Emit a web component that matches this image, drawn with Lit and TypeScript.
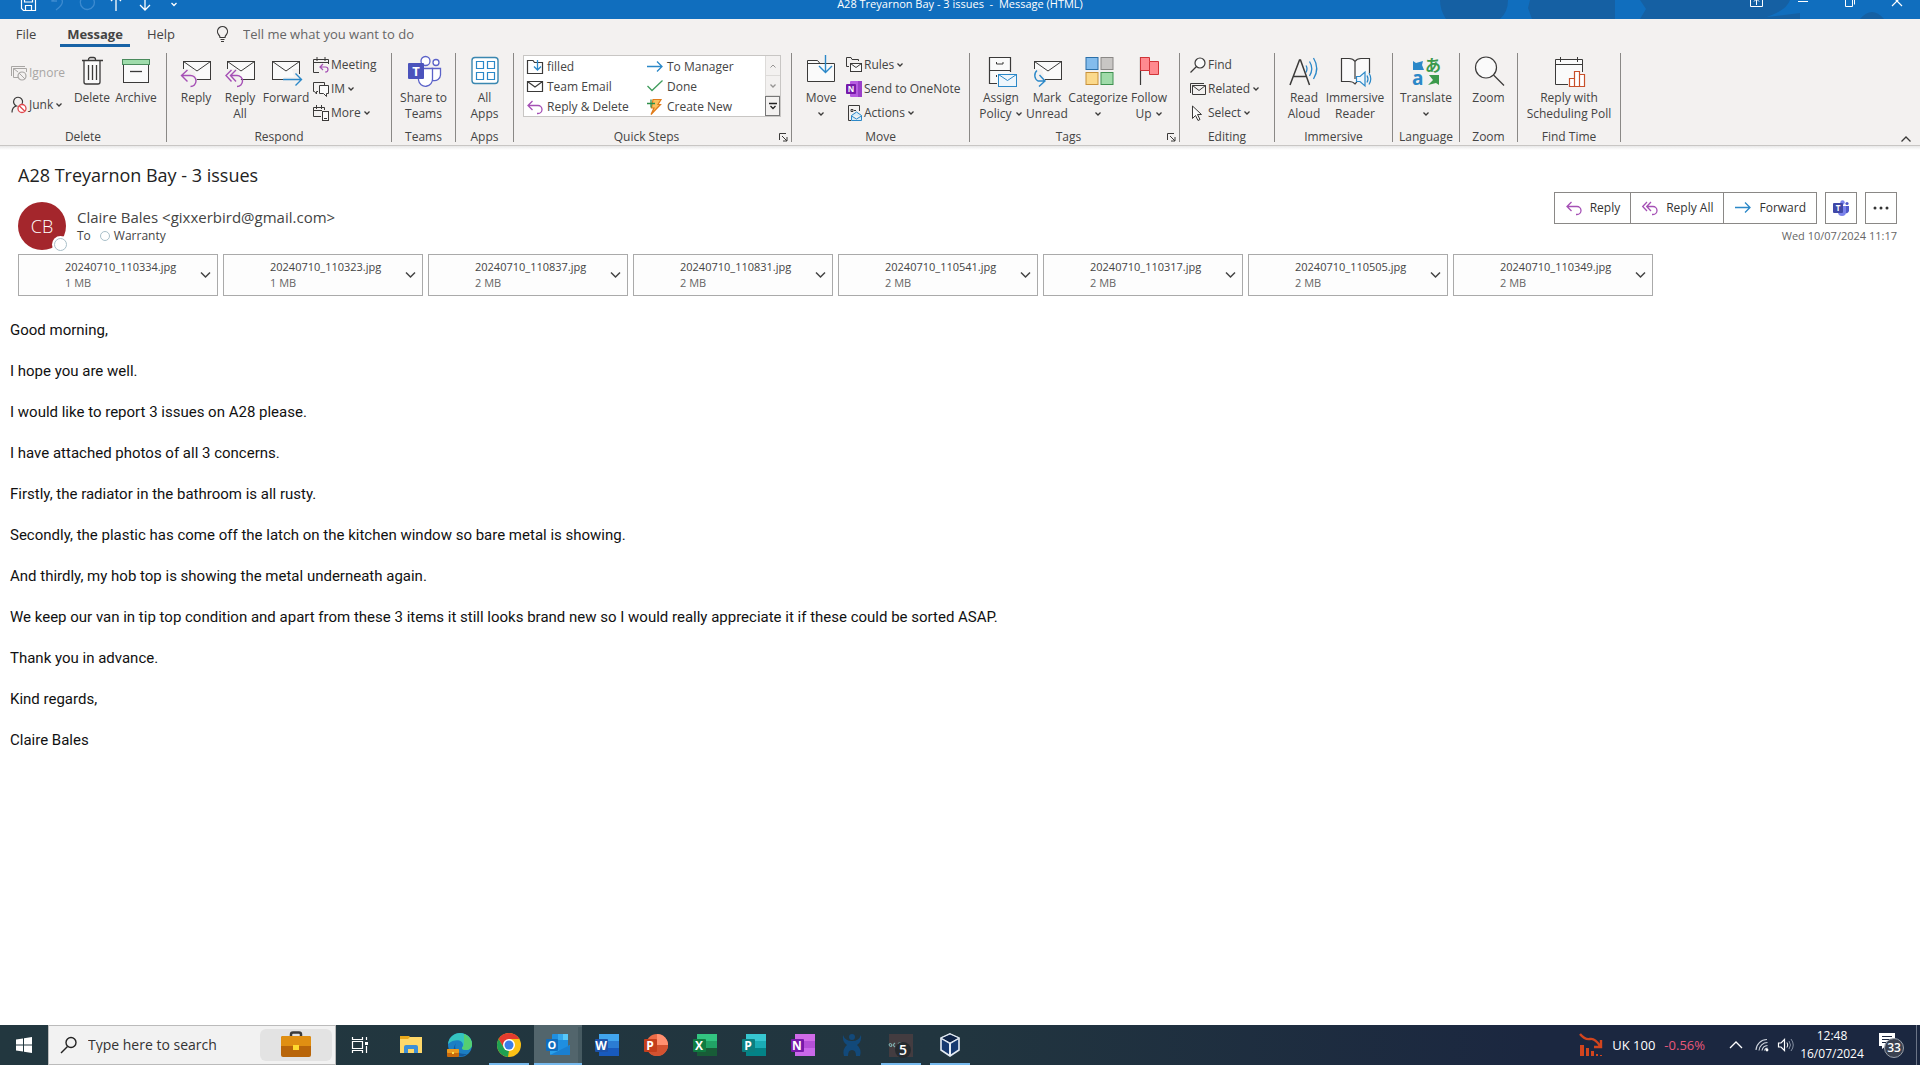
import { LitElement, html, css, svg, nothing, TemplateResult } from "lit";
import { customElement } from "lit/decorators.js";
import { classMap } from "lit/directives/class-map.js";

type Icon = TemplateResult;

const icon = (w: number, h: number, body: unknown, cls = ""): Icon =>
  html`<svg class="ico ${cls}" width=${w} height=${h} viewBox="0 0 ${w} ${h}" fill="none" aria-hidden="true">${body}</svg>`;

const INK = "#3b3a39";
const BLUE = "#2b88c8";
const PURPLE = "#a550b5";

const chevron = (): Icon => icon(8, 6, svg`<path d="M1.500 1.500L4 4L6.500 1.500" stroke=${INK} stroke-width="1.300"/>`);

/* ---------- large ribbon icons, 32 x 32 ---------- */
const envelope = (x: number, y: number) => svg`
  <rect x=${x} y=${y} width="27" height="18" fill="#fafafa" stroke=${INK}/>
  <path d="M${x} ${y}l13.500 9.500L${x + 27} ${y}" stroke=${INK}/>`;

const big = {
  trash: icon(32, 32, svg`<path d="M8 5.500V27a2 2 0 0 0 2 2H22a2 2 0 0 0 2-2V5.500" fill="#fafafa" stroke=${INK} stroke-width="1.300"/>
    <path d="M6 5.500H27M12.500 5.500V4.500a2 2 0 0 1 2-2h3a2 2 0 0 1 2 2v1M12.500 10V25M16.500 10V25M20.500 10V25" stroke=${INK} stroke-width="1.300"/>`),
  archive: icon(32, 32, svg`<rect x="3.500" y="9.500" width="25" height="18" fill="#fafafa" stroke=${INK}/>
    <rect x="2.500" y="4.500" width="27" height="5" fill="#9fdcab" stroke="#4a8a5c"/><path d="M10 16.500H22" stroke=${INK} stroke-width="1.300"/>`),
  reply: icon(32, 32, svg`${envelope(3.5, 6.5)}<path d="M0 14H14L19 32H0Z" fill="#f3f1f0"/>
    <path d="M3.500 6.500V14" stroke=${INK}/><path d="M7.500 15L1.500 20.500L7.500 26.500M1.500 20.500H10.500a5.500 5.500 0 0 1 0 11" stroke=${PURPLE} stroke-width="1.400"/>`),
  replyAll: icon(32, 32, svg`${envelope(3.5, 6.5)}<path d="M0 14H14L19 32H0Z" fill="#f3f1f0"/>
    <path d="M3.500 6.500V14" stroke=${INK}/><path d="M7.500 15L2 20.500L7.500 26.500M12 15L6.500 20.500L12 26.500M6.500 20.500H13a5.500 5.500 0 0 1 0 11" stroke=${PURPLE} stroke-width="1.400"/>`),
  forward: icon(32, 32, svg`${envelope(2.5, 6.5)}<path d="M14 22H24L22 14H32V32H14Z" fill="#f3f1f0"/>
    <path d="M29.500 6.500V19" stroke=${INK}/><path d="M13 24.500H31M25.500 18.500L31.500 24.500L25.500 30.500" stroke=${BLUE} stroke-width="1.400"/>`),
  teams: icon(34, 32, svg`<circle cx="18.500" cy="6" r="4.500" fill="#fff" stroke="#5b62c8" stroke-width="1.300"/>
    <circle cx="29" cy="7.500" r="3" fill="#fff" stroke="#5b62c8" stroke-width="1.300"/>
    <path d="M24.500 13.500H33.500V20a6 6 0 0 1-7.500 5.500" fill="#fff" stroke="#5b62c8" stroke-width="1.300"/>
    <path d="M11.500 13.500H25.500V23.500a7 7 0 0 1-14 1.500Z" fill="#fff" stroke="#5b62c8" stroke-width="1.300"/>
    <rect x="1" y="8" width="16" height="16" rx="1" fill="#4b53bc"/>
    <text x="9" y="21" text-anchor="middle" class="glyph" font-size="13" fill="#fff">T</text>`),
  apps: icon(32, 32, svg`<rect x="3" y="2.500" width="26" height="26" rx="3" fill="#fff" stroke="#3a87b0" stroke-width="1.400"/>
    <path d="M7.500 6.500h7v7h-7ZM18.500 6.500h7v7h-7ZM7.500 17.500h7v7h-7ZM18.500 17.500h7v7h-7Z" stroke="#2b88c8" stroke-width="1.200"/>`),
  move: icon(32, 32, svg`<path d="M2.500 26.500V5.500H12.500L15 8.500H29.500V26.500Z" fill="#fafafa" stroke=${INK}/><path d="M2.500 8.500H15" stroke=${INK}/>
    <path d="M20.500 0V17M14 11L20.500 17.500L27 11" stroke=${BLUE} stroke-width="1.400"/>`),
  policy: icon(32, 32, svg`<path d="M12 28.500H4.500V2.500H25.500V17M4.500 15.500H25.500" fill="#fafafa" stroke=${INK} stroke-width="1.200"/>
    <path d="M11.500 7v2H18V7M11.500 20v2" stroke=${INK}/><rect x="13.500" y="19.500" width="18" height="12" fill="#eef6fc" stroke=${BLUE}/><path d="M13.500 19.500l9 6 9-6" stroke=${BLUE}/>`),
  unread: icon(32, 32, svg`${envelope(3.5, 6.5)}<path d="M0 14H11L16 32H0Z" fill="#f3f1f0"/>
    <path d="M6 15.500a6.500 6.500 0 0 0 1 10.500H13M8.500 20L14 26L8 31.500" stroke=${BLUE} stroke-width="1.400"/>`),
  categorize: icon(32, 32, svg`<rect x="4" y="2.500" width="12" height="12" fill="#83bcec" stroke="#2a6fa8"/><rect x="19" y="2.500" width="12" height="12" fill="#c8c6c4" stroke="#8a8886"/>
    <rect x="4" y="17.500" width="12" height="12" fill="#fbd98b" stroke="#c8913a"/><rect x="19" y="17.500" width="12" height="12" fill="#a0dba9" stroke="#3f9150"/>`),
  flag: icon(32, 32, svg`<path d="M7.500 2V30" stroke=${INK} stroke-width="1.200"/><path d="M7.500 2.500H16.500V6.500H25.500V19.500H16.500V15.500H7.500Z" fill="#ff8a8f" stroke="#d13438"/><path d="M16.500 6.500V15.500" stroke="#d13438"/>`),
  aloud: icon(32, 32, svg`<path d="M18 10.500q2 3 0 7M21.500 6.500q4.500 7 0 14.500M25.500 3q6.500 10.500 0 21" stroke=${BLUE} stroke-width="1.300"/>
    <path d="M2 30L11.500 5H12.500L21.500 30M5.500 21.500H18.500" stroke=${INK} stroke-width="1.500"/>`),
  reader: icon(32, 32, svg`<path d="M16 6.500Q14 3.500 10 3.500H2.500V26.500H10Q14 26.500 16 29Q17 27.500 18 27" fill="#fafafa" stroke=${INK} stroke-width="1.200"/>
    <path d="M16 24V6.500Q18 3.500 22 3.500H30.500V18" fill="#fafafa" stroke=${INK} stroke-width="1.200"/>
    <path d="M17.500 21.500h3.500l5-4.500v14l-5-4.500h-3.500ZM28 20.500q2 3.500 0 7M30 18q3.500 6 0 11.500" fill="#eef6fc" stroke=${BLUE} stroke-width="1.200"/>`),
  translate: icon(32, 32, svg`<path d="M3 6l3 2 7-2-1 4 2 5H3Z" fill="#2b88c8"/><path d="M29 30l-3-2-8 2 5-5-4-5H29Z" fill="#3c9a4c"/>
    <text x="2" y="30" class="glyph" font-size="19" fill="#2b88c8">a</text><text x="15" y="16" class="cjk" font-size="16" fill="#3c9a4c">あ</text>`),
  zoom: icon(32, 32, svg`<circle cx="13" cy="12.500" r="10.500" fill="#fafafa" stroke=${INK} stroke-width="1.200"/><path d="M20.500 20L31 30.500" stroke=${INK} stroke-width="1.200"/>`),
  poll: icon(32, 32, svg`<path d="M15 29.500H2.500V4.500H29.500V17M2.500 9.500H29.500M7.500 2V7M24.500 2V7" fill="#fafafa" stroke=${INK}/>
    <path d="M16.500 23.500H21.500V31.500H16.500ZM21.500 16.500H26.500V31.500H21.500ZM26.500 19.500H31.500V31.500H26.500Z" fill="#fff" stroke="#c8502b" stroke-width="1.200"/>`),
};

/* ---------- small icons, 16 x 16 ---------- */
const replyArrow = svg`<path d="M5.500 2L1 6.500L5.500 11M1 6.500H11a4 4 0 0 1 0 8H10" stroke=${PURPLE} stroke-width="1.300"/>`;
const small = {
  ignore: icon(16, 16, svg`<path d="M7 12.500H2.500V3.500H15.500V7M2.500 3.500L7 7M.500 11V1.500H14" stroke="#a8a6a4"/><circle cx="11" cy="11" r="4" stroke="#a8a6a4" stroke-width="1.200"/><path d="M8 8l6 6" stroke="#a8a6a4"/>`),
  junk: icon(16, 16, svg`<path d="M1 15.500Q1 10 5.500 9A4.500 4.500 0 1 1 11 7" stroke=${INK} stroke-width="1.200"/><circle cx="11" cy="11.500" r="4" fill="#fff" stroke="#e0484d" stroke-width="1.300"/><path d="M8.200 8.700l5.600 5.600" stroke="#e0484d" stroke-width="1.300"/>`),
  meeting: icon(16, 16, svg`<path d="M6 15.500H.500V2.500H15.500V7M.500 5.500H15.500M4 0V4M12 0V4" stroke=${INK}/><path d="M10 7L7 10L10 13M7 10H12.500a2.500 2.500 0 0 1 0 5H12" stroke=${PURPLE} stroke-width="1.200"/>`),
  im: icon(16, 16, svg`<path d="M5 10.500H3.500V13L1.500 10.500H.500V1.500H11.500V4" stroke=${INK}/><path d="M6.500 4.500H15.500V12.500H13.500V15.500L10.500 12.500H6.500Z" fill="#fafafa" stroke=${INK}/>`),
  more: icon(16, 16, svg`<path d="M8 11.500H.500V2.500H11.500V5M.500 5.500H9M3.500 0V4M8.500 0V4" stroke=${INK}/><rect x="9.500" y="6.500" width="6" height="9" fill="#fafafa" stroke=${INK}/><path d="M11 13.500H14" stroke=${INK}/>`),
  folder: icon(16, 16, svg`<path d="M.500 14.500V1.500H6L7.500 3.500H15.500V14.500Z" stroke=${INK} stroke-width="1.200"/><path d="M10.500 1V11M7 7.500L10.500 11L14 7.500" stroke=${BLUE} stroke-width="1.300"/>`),
  mail: icon(16, 16, svg`<path d="M.500 2.500H15.500V12.500H.500ZM.500 2.500L8 8L15.500 2.500" stroke=${INK} stroke-width="1.200"/>`),
  reply: icon(16, 16, replyArrow),
  replyAll: icon(16, 16, svg`<path d="M5 2L.700 6.500L5 11M9 2L4.700 6.500L9 11M4.700 6.500H11a4 4 0 0 1 0 8H10" stroke=${PURPLE} stroke-width="1.300"/>`),
  forward: icon(16, 16, svg`<path d="M0 7.500H15M10 2.500L15 7.500L10 12.500" stroke=${BLUE} stroke-width="1.300"/>`),
  check: icon(16, 16, svg`<path d="M.500 7L5 11.500L15.500 1.500" stroke="#3f9c5c" stroke-width="1.300"/>`),
  bolt: icon(16, 16, svg`<path d="M6 .500H14L11 5.500H13.500L4 15.500L7 9H4.500Z" fill="#fbc15e" stroke="#e07b1a" stroke-width="1.200"/><path d="M0 4.500H8M4 .500V8.500" stroke="#2f8f4a" stroke-width="1.300"/>`),
  rules: icon(16, 16, svg`<path d="M3 9.500H.500V.500H5L6 2.500H12.500V4" stroke=${INK}/><rect x="4.500" y="6.500" width="11" height="8" fill="#fafafa" stroke=${INK}/><path d="M4.500 6.500l5.500 4 5.500-4" stroke=${INK}/>`),
  onenote: icon(16, 16, svg`<rect x="4" y="0" width="12" height="16" rx="1" fill="#b65be0"/><path d="M12 0h4v16h-4Z" fill="#9a3fc8"/><rect x="0" y="3" width="10" height="10" rx="1" fill="#7719aa"/><text x="5" y="11" text-anchor="middle" class="glyph" font-size="8" fill="#fff">N</text>`),
  actions: icon(16, 16, svg`<path d="M5 15.500H2.500V.500H13.500V6" stroke=${INK}/><path d="M5 4.500h2v2H5ZM8 5.500h2" stroke=${INK}/><path d="M5.500 10.500L10.500 7L15.500 10.500V15.500H5.500ZM5.500 11L10.500 14L15.500 11" fill="#d8ecf8" stroke=${BLUE}/>`),
  find: icon(16, 16, svg`<circle cx="10" cy="6" r="5" fill="#fafafa" stroke=${INK} stroke-width="1.200"/><path d="M6.500 9.500L.500 15.500" stroke=${INK} stroke-width="1.200"/>`),
  related: icon(16, 16, svg`<path d="M.500 12V2.500H14" stroke=${INK}/><path d="M2.500 4.500H15.500V13.500H2.500ZM2.500 4.500l6.500 5 6.500-5" stroke=${INK}/>`),
  select: icon(16, 16, svg`<path d="M2.500 1V13.500L5.500 10.500L8 15.500L10 14.500L7.500 9.500H11.500Z" fill="#fafafa" stroke=${INK}/>`),
};

/* ---------- taskbar icons, 24 x 24 ---------- */
const office = (letter: string, tile: string, a: string, b: string, c: string, round = false): Icon =>
  icon(26, 24, svg`${round
    ? svg`<circle cx="14" cy="12" r="11" fill=${b}/><path d="M14 1a11 11 0 0 1 11 11H14Z" fill=${a}/><path d="M25 12a11 11 0 0 1-22 0Z" fill=${c}/>`
    : svg`<rect x="5" y="1" width="20" height="22" rx="1" fill=${b}/><path d="M5 1H25V8H5Z" fill=${a}/><path d="M5 15H25V23H5Z" fill=${c}/>`}
    <rect x="1" y="6" width="13" height="13" rx="1" fill=${tile}/><text x="7" y="17" text-anchor="middle" class="glyph" font-size="12" fill="#fff">${letter}</text>`);

const task = {
  start: icon(18, 18, svg`<path d="M1 3.500L8 2.500V8.500H1ZM9 2.300L17 1V8.500H9ZM1 9.500H8V15.500L1 14.500ZM9 9.500H17V17L9 15.700Z" fill="#fff"/>`),
  search: icon(18, 18, svg`<circle cx="11" cy="6.500" r="5" stroke="#222" stroke-width="1.400"/><path d="M7.500 10.500L1 17" stroke="#222" stroke-width="1.400"/>`),
  briefcase: icon(32, 28, svg`<path d="M11 5V3.500a2 2 0 0 1 2-2h6a2 2 0 0 1 2 2V5" stroke="#3a3a3a" stroke-width="2.500"/><rect x="1" y="5" width="30" height="21" rx="2" fill="#b8650a"/><path d="M1 7a2 2 0 0 1 2-2H29a2 2 0 0 1 2 2V15H1Z" fill="#e08f12"/><rect x="13" y="14" width="6" height="5" fill="#ffd92e"/>`),
  taskview: icon(18, 18, svg`<path d="M1.500 1V3.500H11.500V1M1.500 17V14.500H11.500V17M1.500 5.500H11.500V12.500H1.500ZM15.500 1V4M15.500 10V17" stroke="#fff" stroke-width="1.200"/><rect x="14" y="6" width="3" height="3" fill="#fff"/>`),
  explorer: icon(24, 24, svg`<path d="M1 3H10L12 5H22V8H1Z" fill="#e8a91c"/><path d="M1 6H9L11 4H23V20H1Z" fill="#ffd869"/><path d="M5 20V14a2 2 0 0 1 2-2H17a2 2 0 0 1 2 2V20H15V16H9V20Z" fill="#3d8fd6"/>`),
  edge: icon(26, 26, svg`<circle cx="13" cy="13" r="12" fill="#1c7fc4"/><path d="M1 12C2 5 7 1 13 1c7 0 12 5 12 11 0 4-3 6-6 6-3 0-4-1-4-2 0-1 1-1 1-3C16 8 8 6 1 12Z" fill="#35c4c0"/><path d="M17 2c5 2 8 6 8 10 0 4-3 6-6 6-3 0-4-1-4-2 0-1 2-2 2-4Z" fill="#55cf72"/><path d="M9 11C6 17 11 23 20 22C12 28 2 22 9 11Z" fill="#135a9e"/><rect x="0" y="17" width="12" height="8" rx="1" fill="#c96a0c"/><rect x="0" y="17" width="12" height="4" rx="1" fill="#ec9a1e"/><rect x="5" y="20" width="2" height="2" fill="#ffe052"/>`),
  chrome: icon(26, 26, svg`<circle cx="13" cy="13" r="12" fill="#fbc116"/><path d="M2.600 7A12 12 0 0 1 23.400 7H13L8 16Z" fill="#e33b2e"/><path d="M2.600 7L8 16L13 18.500L12 25A12 12 0 0 1 2.600 7Z" fill="#1fa152"/><circle cx="13" cy="13" r="6" fill="#fff"/><circle cx="13" cy="13" r="4.500" fill="#3b7de8"/>`),
  outlook: icon(26, 24, svg`<rect x="7" y="1" width="16" height="18" rx="1" fill="#1f8fe0"/><path d="M13 1H18V7H13Z" fill="#35a8ee"/><path d="M18 1H23V7H18Z" fill="#58c8fa"/><path d="M5 12L15 18L25 12V21a1 1 0 0 1-1 1H6a1 1 0 0 1-1-1Z" fill="#2aa0ea"/><path d="M5 22L25 12V22Z" fill="#1a7fd0"/><rect x="1" y="6" width="12" height="12" rx="1" fill="#0f6cbd"/><text x="7" y="16" text-anchor="middle" class="glyph" font-size="11" fill="#fff">O</text>`),
  person: icon(24, 24, svg`<circle cx="12" cy="4" r="3" fill="#12497a"/><path d="M3 2Q5 8 12 8T21 2Q22 9 17 12Q22 16 20 23H16Q16 17 12 17T8 23H4Q2 16 7 12Q2 9 3 2Z" fill="#12497a"/>`),
  five: icon(26, 26, svg`<rect x="1" y="2" width="24" height="23" fill="#433c40"/><path d="M1 13q1-3 3 0q-1 3-3 0M7 11q-3 2 0 4M10 14q0-4 3-3t3 3" stroke="#7fb0b0" stroke-width="1.200"/><circle cx="15" cy="18" r="8" fill="#262b2f"/><text x="15" y="23" text-anchor="middle" class="badge" font-size="14" fill="#fff">5</text>`),
  vbox: icon(24, 26, svg`<path d="M12 2L21 6V18L12 24L3 18V6Z" fill="#173a70" stroke="#e6edf5" stroke-width="1.600"/><path d="M3 6L12 11L21 6M12 11V24" stroke="#e6edf5" stroke-width="2"/><path d="M12 2L21 6L12 11L3 6Z" fill="#0f2448" stroke="#e6edf5"/>`),
  market: icon(24, 24, svg`<path d="M1 1Q6 7 11 6T21 13M22 7V14H15" stroke="#d2451e" stroke-width="2.400"/><path d="M1 12H5V23H1ZM7 15H10V23H7ZM12 18H15V23H12ZM17 21H19V23H17ZM21 22H23V23H21Z" fill="#d2451e"/>`),
  up: icon(14, 8, svg`<path d="M1 7L7 1L13 7" stroke="#fff" stroke-width="1.300"/>`, "first"),
  wifi: icon(14, 14, svg`<path d="M1 12A11 11 0 0 1 12 1.500M4 12.500A8.500 8.500 0 0 1 12.500 4.500M7 12.500A6 6 0 0 1 12.500 7.500M9.500 12.500A3.500 3.500 0 0 1 12.500 10" stroke="#cfd5de" stroke-width="1.100"/><circle cx="12" cy="12" r="1.400" fill="#fff"/>`),
  sound: icon(18, 14, svg`<path d="M1.500 5H4L7.500 1.500V12.500L4 9H1.500Z" stroke="#fff" stroke-width="1.200"/><path d="M10 4.500q1.500 2.500 0 5" stroke="#fff"/><path d="M12 3q3 4 0 8M14 1q4.500 6 0 12" stroke="#8590a2"/>`),
  note: icon(28, 26, svg`<path d="M2 1H18V14H9L5 17V14H2Z" fill="#fff"/><path d="M5 4.500H15M5 7.500H15M5 10.500H11" stroke="#1b2740"/><circle cx="17" cy="16" r="9.500" fill="#3a4150" stroke="#9aa1ac"/><text x="17" y="20" text-anchor="middle" class="badge" font-size="12" fill="#fff">33</text>`),
};

const teamsMini = icon(16, 16, svg`<circle cx="9.500" cy="2.500" r="2.200" fill="#7b83eb"/><circle cx="14" cy="3.500" r="1.600" fill="#5059c9"/><path d="M12 6H16V11a3 3 0 0 1-4 2Z" fill="#5059c9"/><path d="M5 6H13V12a4 4 0 0 1-8 0Z" fill="#7b83eb"/><rect x="0" y="3" width="10" height="10" rx="1" fill="#4048a8"/><text x="5" y="11" text-anchor="middle" class="glyph" font-size="8" fill="#fff">T</text>`);

const ATTACHMENTS: [string, string][] = [
  ["20240710_110334.jpg", "1 MB"], ["20240710_110323.jpg", "1 MB"],
  ["20240710_110837.jpg", "2 MB"], ["20240710_110831.jpg", "2 MB"],
  ["20240710_110541.jpg", "2 MB"], ["20240710_110317.jpg", "2 MB"],
  ["20240710_110505.jpg", "2 MB"], ["20240710_110349.jpg", "2 MB"],
];

const BODY = [
  "Good morning,", "I hope you are well.", "I would like to report 3 issues on A28 please.",
  "I have attached photos of all 3 concerns.", "Firstly, the radiator in the bathroom is all rusty.",
  "Secondly, the plastic has come off the latch on the kitchen window so bare metal is showing.",
  "And thirdly, my hob top is showing the metal underneath again.",
  "We keep our van in tip top condition and apart from these 3 items it still looks brand new so I would really appreciate it if these could be sorted ASAP.",
  "Thank you in advance.", "Kind regards,", "Claire Bales",
];

const TASKS: { name: string; icon: Icon; state?: "open" | "active" }[] = [
  { name: "Task View", icon: task.taskview }, { name: "File Explorer", icon: task.explorer },
  { name: "Edge", icon: task.edge }, { name: "Chrome", icon: task.chrome, state: "open" },
  { name: "Outlook", icon: task.outlook, state: "active" },
  { name: "Word", icon: office("W", "#1c52a8", "#41a5ee", "#2b7cd3", "#185abd") },
  { name: "PowerPoint", icon: office("P", "#c43e1c", "#ff9070", "#ed6c47", "#d35230", true) },
  { name: "Excel", icon: office("X", "#107c41", "#33c481", "#21a366", "#185c37") },
  { name: "Publisher", icon: office("P", "#0b7f80", "#37c6d0", "#1aacb5", "#038387") },
  { name: "OneNote", icon: office("N", "#7719aa", "#d06be8", "#b44fd8", "#c968ea") },
  { name: "People", icon: task.person }, { name: "Recorder", icon: task.five, state: "open" },
  { name: "VirtualBox", icon: task.vbox, state: "open" },
];

const launcher = (label: string) => html`<button class="launcher" aria-label=${label}>${icon(9, 9, svg`<path d="M.500 7V.500H7M3 3L8 8M8 4V8H4" stroke=${INK}/>`)}</button>`;

@customElement("app-root")
export class AppRoot extends LitElement {
  static styles = css`
    :host { display: block; font-family: "Open Sans", "Noto Sans", sans-serif; font-size: 12px; line-height: 16px; color: #444; }
    * { box-sizing: border-box; }
    button, input { font: inherit; color: inherit; background: none; border: 0; padding: 0; margin: 0; }
    button { cursor: pointer; white-space: nowrap; }
    .ico { display: block; flex: none; overflow: visible; }
    .glyph { font-family: "Open Sans", sans-serif; font-weight: 700; }
    .cjk { font-family: "Noto Sans CJK JP", sans-serif; font-weight: 700; }
    .badge { font-family: "Open Sans", sans-serif; font-weight: 600; }
    .page { min-height: 100vh; display: flex; flex-direction: column; background: #fff; }

    .titlebar { position: relative; height: 19px; overflow: hidden; background: #106ebe; color: #fff; display: flex; align-items: flex-end; }
    .pattern { position: absolute; right: 0; top: 0; }
    .titlerow { position: relative; flex: 1; height: 32px; display: grid; grid-template-columns: 1fr auto 1fr; align-items: center; }
    .quick { display: flex; align-items: center; gap: 13px; padding-left: 20px; }
    .window { display: flex; justify-content: flex-end; align-items: center; gap: 31px; padding: 0 15px 4px 0; }
    .title { white-space: pre; font-size: 11px; padding-top: 2px; }

    .tabs { background: #f3f1f0; display: flex; align-items: stretch; height: 34px; padding: 0 0 6px 7px; font-size: 13px; }
    .tab { display: flex; align-items: center; justify-content: center; width: 38px; border-bottom: 3px solid transparent; padding-top: 5px; }
    .tab.on { width: 70px; margin: 0 12px 0 15px; border-color: #1863a6; font-weight: 700; }
    .tell { display: flex; align-items: center; gap: 14px; margin-left: 36px; padding-top: 2px; }
    .tell input { width: 240px; }
    .tell input::placeholder { color: #666; opacity: 1; }

    .ribbon { background: #f3f1f0; height: 93px; display: flex; border-bottom: 1px solid #c8c6c4; }
    .shade { height: 4px; background: linear-gradient(#e8e8e8, #fff); }
    .group { display: flex; flex-direction: column; height: 89px; border-right: 1px solid #8a8886; flex: none; }
    .tools { display: flex; flex: none; height: 72px; padding: 0 7px; }
    .tools.mid { justify-content: center; padding: 0; }
    .caption { flex: none; display: flex; align-items: center; text-align: center; height: 16px; margin-top: 4px; }
    .caption span { flex: 1; white-space: nowrap; }
    .launcher { width: 12px; }
    .w58 { width: 58px; } .w64 { width: 64px; } .w67 { width: 67px; } .w95 { width: 95px; }
    .w103 { width: 103px; } .w118 { width: 118px; } .w167 { width: 167px; } .w178 { width: 178px; }
    .w210 { width: 210px; } .w225 { width: 225px; } .w278 { width: 278px; }
    .large { display: flex; flex-direction: column; align-items: center; gap: 3px; padding-top: 2px; width: 44px; }
    .large.mid { width: 48px; }
    .large.wide { width: 58px; }
    .large.full { width: 100%; }
    .lines { display: flex; flex-direction: column; align-items: center; }
    .line { display: flex; align-items: center; gap: 3px; height: 16px; }
    .stack { display: flex; flex-direction: column; padding-left: 3px; }
    .stack.two { padding: 4px 0 4px 4px; width: 63px; }
    .item { display: flex; align-items: center; gap: 2px; height: 24px; }
    .two .item { height: 32px; }
    .item:disabled { color: #a8a6a4; }
    .gallery { display: grid; grid-template-columns: 1fr 15px; width: 258px; height: 62px; margin: 2px 0 0 2px; background: #fff; border: 1px solid #c8c6c4; }
    .steps { display: grid; grid-template-columns: 120px 1fr; grid-auto-rows: 20px; padding-left: 3px; }
    .step { display: flex; align-items: center; gap: 4px; padding-top: 1px; }
    .scroll { display: grid; grid-template-rows: 20px 20px 1fr; background: #f3f1f0; }
    .scroll button { display: flex; align-items: center; justify-content: center; border-left: 1px solid #c8c6c4; border-bottom: 1px solid #c8c6c4; }
    .scroll button:disabled { opacity: 0.5; }
    .scroll .open { border: 1px solid #777; opacity: 1; }
    .collapse { margin: auto 8px 2px auto; }

    .mail { flex: 1; display: flex; flex-direction: column; }
    .head { padding: 11px 23px 0 18px; }
    h1 { margin: 0; font-size: 18px; line-height: 28px; font-weight: 400; color: #222; }
    .meta { display: flex; justify-content: space-between; }
    .sender { display: flex; gap: 11px; padding-top: 13px; }
    .avatar { position: relative; width: 48px; height: 48px; border-radius: 50%; background: #a4262c; color: #fff; display: flex; align-items: center; justify-content: center; font-size: 18px; font-weight: 300; }
    .dot { border: 1px solid #a9bfc9; border-radius: 50%; background: #fff; width: 10px; height: 10px; }
    .avatar .dot { position: absolute; right: -1px; bottom: -1px; width: 13px; height: 13px; box-shadow: 0 0 0 2px #fff; }
    .from { font-size: 15px; line-height: 22px; padding-top: 4px; }
    .to { display: flex; align-items: center; gap: 4px; }
    .to .dot { margin-left: 5px; }
    .side { display: flex; flex-direction: column; align-items: flex-end; gap: 4px; padding-top: 3px; color: #666; }
    .side time { font-size: 11px; }
    .actions { display: flex; gap: 8px; color: #333; }
    .bar { display: flex; border: 1px solid #8a8886; height: 32px; }
    .bar button { display: flex; align-items: center; justify-content: center; gap: 8px; padding: 0 10px 0 11px; }
    .bar button + button { border-left: 1px solid #8a8886; }
    .bar.one button { width: 30px; padding: 0; }
    .files { display: flex; flex-wrap: wrap; gap: 5px; padding: 4px 0 0; margin: 0; list-style: none; }
    .file { width: 200px; height: 42px; border: 1px solid #aaa; background: #fdfdfd; display: flex; align-items: center; justify-content: space-between; padding: 0 6px 0 46px; font-size: 11px; }
    .file small { display: block; font-size: 11px; color: #666; }
    .body { padding: 24px 10px; display: flex; flex-direction: column; gap: 21px; font-family: Roboto, sans-serif; font-size: 15px; line-height: 20px; color: #111; }
    .body p { margin: 0; }

    .taskbar { display: flex; height: 40px; color: #fff; background: linear-gradient(90deg, #22373f, #21353f 50%, #1b2740 80%); }
    .start { width: 48px; display: flex; align-items: center; justify-content: center; }
    .search { width: 288px; background: #f2f2f2; border: 1px solid #bbb; color: #333; display: flex; align-items: center; gap: 10px; padding: 3px 3px 3px 11px; font-size: 14px; }
    .search input { flex: 1; min-width: 0; }
    .search input::placeholder { color: #333; opacity: 1; }
    .art { width: 72px; height: 32px; border-radius: 6px; background: #e3e3e3; display: flex; align-items: center; justify-content: center; }
    .apps { display: flex; gap: 1px; }
    .app { width: 48px; display: flex; align-items: center; justify-content: center; border: solid transparent; border-width: 2px 0; }
    .app:first-child { margin-right: 2px; }
    .app.open { background: linear-gradient(#76b9ed, #76b9ed) center bottom / 40px 2px no-repeat border-box; }
    .app.active { background: #52656c; border-bottom-color: #76b9ed; box-shadow: inset -4px 0 #465a61; }
    .tray { margin-left: auto; display: flex; align-items: center; }
    .market { display: flex; align-items: center; gap: 9px; font-size: 13px; padding-right: 24px; }
    .market em { font-style: normal; color: #e8587a; }
    .status { display: flex; align-items: center; gap: 8px; }
    .first { margin-right: 4px; }
    .clock { width: 82px; padding-right: 8px; text-align: center; line-height: 18px; }
    .notes { width: 39px; }
    .peek { width: 4px; align-self: stretch; border-left: 1px solid #6b7486; }
  `;

  private large(img: Icon, lines: (string | null)[], caret = false, cls = "") {
    const last = lines.length - 1;
    return html`<button class="large ${cls}">${img}<span class="lines">${lines.map((t, i) =>
      html`<span class="line">${t ?? nothing}${caret && i === last ? chevron() : nothing}</span>`)}</span></button>`;
  }

  private item(img: Icon, text: string, caret = false, disabled = false) {
    return html`<button class="item" ?disabled=${disabled}>${img}<span>${text}</span>${caret ? chevron() : nothing}</button>`;
  }

  private group(width: string, name: string, tools: unknown, opts: { mid?: boolean; launch?: boolean } = {}) {
    return html`<section class="group ${width}" aria-label=${name}>
      <div class=${classMap({ tools: true, mid: !!opts.mid })}>${tools}</div>
      <div class="caption"><span>${name}</span>${opts.launch ? launcher(`${name} options`) : nothing}</div>
    </section>`;
  }

  private titlebar() {
    return html`<header class="titlebar">
      <svg class="pattern" width="500" height="19" aria-hidden="true">
        <g fill="#1560a3"><path d="M20 0H88Q88 12 80 19H26Q20 10 20 0ZM110 0H195V19H112L108 8ZM220 0H370Q366 12 340 19H220L226 9ZM440 19q12-14 24 0Z"/></g>
        <path d="M330 19L380 13V19Z" fill="#1560a3"/>
      </svg>
      <div class="titlerow">
        <div class="quick">
          ${icon(17, 17, svg`<path d="M1.500 1.500H15.500V15.500H3.500L1.500 13.500ZM4.500 1.500V7H12.500V1.500M5.500 15.500V10.500H11.500V15.500" stroke="#fff" stroke-width="1.200"/>`)}
          ${icon(16, 16, svg`<path d="M2 1V6H7M2 6Q9 0 12 5Q14 9 6 15" stroke="#3d8bd0" stroke-width="1.300"/>`)}
          ${icon(16, 16, svg`<path d="M11 1A7 7 0 1 1 4 2" stroke="#3d8bd0" stroke-width="1.300"/>`)}
          ${icon(16, 16, svg`<path d="M8 16V1M3 6L8 1L13 6" stroke="#fff" stroke-width="1.300"/>`)}
          ${icon(16, 16, svg`<path d="M8 0V15M3 10L8 15L13 10" stroke="#fff" stroke-width="1.300"/>`)}
          ${icon(16, 16, svg`<path d="M5.500 8L8 10.500L10.500 8" stroke="#fff" stroke-width="1.300"/>`)}
        </div>
        <span class="title">A28 Treyarnon Bay - 3 issues  -  Message (HTML)</span>
        <div class="window">
          ${icon(14, 12, svg`<path d="M.500 .500H12.500V11.500H.500ZM6.500 10V4M4 6.500L6.500 4L9 6.500" stroke="#fff"/>`)}
          ${icon(16, 12, svg`<path d="M3 6.500H13" stroke="#fff"/>`)}
          ${icon(16, 12, svg`<path d="M3.500 3.500H10.500V11.500H3.500ZM5.500 3V1.500H12.500V9.500" stroke="#fff"/>`)}
          ${icon(16, 12, svg`<path d="M3 1L13 11M13 1L3 11" stroke="#fff" stroke-width="1.200"/>`)}
        </div>
      </div>
    </header>`;
  }

  private ribbon() {
    return html`<nav class="tabs" aria-label="Ribbon tabs">
        <button class="tab">File</button><button class="tab on">Message</button><button class="tab">Help</button>
        <label class="tell">${icon(13, 18, svg`<path d="M4 12.500Q4 11 2.500 9.500A5 5 0 1 1 10.500 9.500Q9 11 9 12.500ZM4.500 14.500H8.500M5 16.500H8" stroke=${INK} stroke-width="1.200"/>`)}
          <input type="text" aria-label="Tell me what you want to do" placeholder="Tell me what you want to do"></label>
      </nav>
      <div class="ribbon">
        ${this.group("w167", "Delete", html`<div class="stack two">${this.item(small.ignore, "Ignore", false, true)}${this.item(small.junk, "Junk", true)}</div>
          ${this.large(big.trash, ["Delete"])}${this.large(big.archive, ["Archive"])}`)}
        ${this.group("w225", "Respond", html`${this.large(big.reply, ["Reply"])}${this.large(big.replyAll, ["Reply", "All"])}${this.large(big.forward, ["Forward"], false, "mid")}
          <div class="stack">${this.item(small.meeting, "Meeting")}${this.item(small.im, "IM", true)}${this.item(small.more, "More", true)}</div>`)}
        ${this.group("w64", "Teams", this.large(big.teams, ["Share to", "Teams"], false, "full"), { mid: true })}
        ${this.group("w58", "Apps", this.large(big.apps, ["All", "Apps"], false, "full"), { mid: true })}
        ${this.group("w278", "Quick Steps", html`<div class="gallery"><div class="steps">
            ${[[small.folder, "filled"], [small.forward, "To Manager"], [small.mail, "Team Email"], [small.check, "Done"], [small.reply, "Reply & Delete"], [small.bolt, "Create New"]].map(
              ([i, t]) => html`<button class="step">${i}<span>${t}</span></button>`)}
          </div><div class="scroll">
            <button disabled aria-label="Scroll up">${icon(8, 6, svg`<path d="M1.500 4.500L4 2L6.500 4.500" stroke=${INK}/>`)}</button>
            <button disabled aria-label="Scroll down">${chevron()}</button>
            <button class="open" aria-label="More quick steps">${icon(8, 8, svg`<path d="M0 1.500H8M1.500 4L4 6.500L6.500 4" stroke="#222" stroke-width="1.300"/>`)}</button>
          </div></div>`, { launch: true })}
        ${this.group("w178", "Move", html`${this.large(big.move, ["Move", null], true)}
          <div class="stack">${this.item(small.rules, "Rules", true)}${this.item(small.onenote, "Send to OneNote")}${this.item(small.actions, "Actions", true)}</div>`)}
        ${this.group("w210", "Tags", html`${this.large(big.policy, ["Assign", "Policy"], true, "mid")}${this.large(big.unread, ["Mark", "Unread"])}
          ${this.large(big.categorize, ["Categorize", null], true, "wide")}${this.large(big.flag, ["Follow", "Up"], true)}`, { launch: true })}
        ${this.group("w95", "Editing", html`<div class="stack">${this.item(small.find, "Find")}${this.item(small.related, "Related", true)}${this.item(small.select, "Select", true)}</div>`)}
        ${this.group("w118", "Immersive", html`${this.large(big.aloud, ["Read", "Aloud"])}${this.large(big.reader, ["Immersive", "Reader"], false, "wide")}`)}
        ${this.group("w67", "Language", this.large(big.translate, ["Translate", null], true, "full"), { mid: true })}
        ${this.group("w58", "Zoom", this.large(big.zoom, ["Zoom"], false, "full"), { mid: true })}
        ${this.group("w103", "Find Time", this.large(big.poll, ["Reply with", "Scheduling Poll"], false, "full"), { mid: true })}
        <button class="collapse" aria-label="Collapse the ribbon">${icon(12, 8, svg`<path d="M1.500 6.500L6 2L10.500 6.500" stroke=${INK} stroke-width="1.300"/>`)}</button>
      </div>
      <div class="shade"></div>`;
  }

  private message() {
    return html`<main class="mail">
      <div class="head">
        <h1>A28 Treyarnon Bay - 3 issues</h1>
        <div class="meta">
          <div class="sender">
            <div class="avatar">CB<span class="dot"></span></div>
            <div><div class="from">Claire Bales &lt;gixxerbird@gmail.com&gt;</div>
              <div class="to">To <span class="dot"></span><span>Warranty</span></div></div>
          </div>
          <div class="side">
            <div class="actions">
              <div class="bar"><button>${small.reply}Reply</button><button>${small.replyAll}Reply All</button><button>${small.forward}Forward</button></div>
              <div class="bar one"><button aria-label="Share to Teams">${teamsMini}</button></div>
              <div class="bar one"><button aria-label="More actions">${icon(16, 4, svg`<circle cx="2" cy="2" r="1.500" fill="#333"/><circle cx="8" cy="2" r="1.500" fill="#333"/><circle cx="14" cy="2" r="1.500" fill="#333"/>`)}</button></div>
            </div>
            <time>Wed 10/07/2024 11:17</time>
          </div>
        </div>
        <ul class="files">${ATTACHMENTS.map(([n, s]) => html`<li class="file"><span>${n}<small>${s}</small></span>
          <button aria-label="Options for ${n}">${icon(11, 8, svg`<path d="M1 1.500L5.500 6L10 1.500" stroke="#444" stroke-width="1.500"/>`)}</button></li>`)}</ul>
      </div>
      <article class="body">${BODY.map((t) => html`<p>${t}</p>`)}</article>
    </main>`;
  }

  private taskbar() {
    return html`<footer class="taskbar">
      <button class="start" aria-label="Start">${task.start}</button>
      <label class="search">${task.search}<input type="search" aria-label="Type here to search" placeholder="Type here to search"><span class="art">${task.briefcase}</span></label>
      <div class="apps">${TASKS.map((t) => html`<button class=${classMap({ app: true, open: t.state === "open", active: t.state === "active" })} aria-label=${t.name}>${t.icon}</button>`)}</div>
      <div class="tray">
        <button class="market">${task.market}<span>UK 100</span><em>-0.56%</em></button>
        <div class="status">${task.up}${task.wifi}${task.sound}</div>
        <button class="clock"><div>12:48</div><div>16/07/2024</div></button>
        <button class="notes" aria-label="Notifications">${task.note}</button>
        <span class="peek"></span>
      </div>
    </footer>`;
  }

  render() {
    return html`<div class="page">${this.titlebar()}${this.ribbon()}${this.message()}${this.taskbar()}</div>`;
  }
}
